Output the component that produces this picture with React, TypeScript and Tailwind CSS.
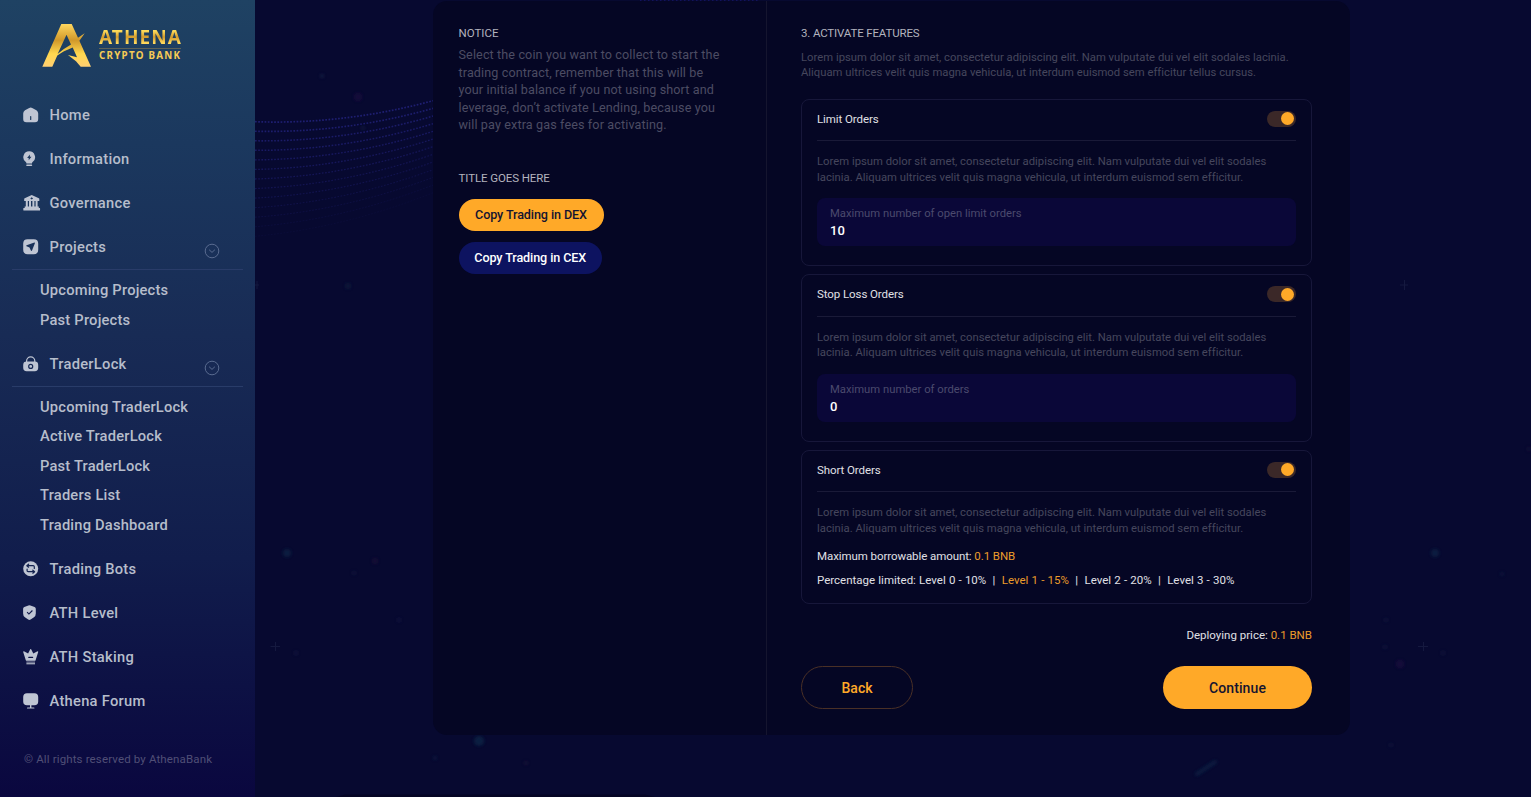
import React from "react";

const menuText = "font-medium text-[14.7px] leading-[20px] text-[#b6bdcb] whitespace-nowrap";

function Icon({ children, w = 18 }: { children: React.ReactNode; w?: number }) {
  return (
    <svg width={w} height="16" viewBox={`0 0 ${w} 16`} fill="#bfc5d3" fillRule="evenodd" className="shrink-0">
      {children}
    </svg>
  );
}

const HomeIcon = () => (
  <Icon>
    <path d="M6.2 .9Q7.7 0 9.2 .9L13.4 3.3Q15.2 4.4 15.2 6.6V12Q15.2 15.2 12 15.2H3.4Q.2 15.2 .2 12V6.6Q.2 4.4 2 3.3ZM7.1 9.6V12.4Q7.1 13 7.7 13Q8.3 13 8.3 12.4V9.6Q8.3 9 7.7 9Q7.1 9 7.1 9.6Z" />
  </Icon>
);
const BulbIcon = () => (
  <Icon>
    <path d="M6.2 .3A5.9 5.9 0 0 1 9.6 11Q9 11.5 9 12.3V12.6H3.4V12.3Q3.4 11.5 2.8 11A5.9 5.9 0 0 1 6.2 .3ZM6.9 3.5L4.1 6.9H5.7V9.2L8.5 5.8H6.9Z" />
    <rect x="3.2" y="13.5" width="6" height="1.5" rx=".7" />
  </Icon>
);
const BankIcon = () => (
  <Icon>
    <path d="M8.7 0L15.8 3.2Q16.3 3.5 16.3 4V6H1.2V4Q1.2 3.5 1.7 3.2ZM8.7 2.2L7.3 3.4L8.7 4.6L10.1 3.4Z" />
    <path d="M2.8 6H4.8V12H2.8ZM6 6H8V12H6ZM9.4 6H11.4V12H9.4ZM12.6 6H14.6V12H12.6Z" />
    <path d="M1.7 11.6H15.8V13H17Q17.2 14.2 17 15.6H.4Q.2 14.2 .4 13H1.7Z" />
  </Icon>
);
const ProjectIcon = () => (
  <Icon>
    <path d="M4.6 .2H10.8Q15.2 .2 15.2 4.6V10.8Q15.2 15.2 10.8 15.2H4.6Q.2 15.2 .2 10.8V4.6Q.2 .2 4.6 .2ZM11.4 3.6L3.6 6.2Q2.8 6.6 3.5 7.2L6.5 8.4L7.9 11.6Q8.4 12.4 8.9 11.7L11.9 4.3Q12.1 3.5 11.4 3.6Z" />
  </Icon>
);
const LockIcon = () => (
  <Icon>
    <path d="M3 6V5A4.7 4.7 0 0 1 12.4 5V6H11.2V5A3.5 3.5 0 0 0 4.2 5V6Z" />
    <path d="M3.6 5.6H11.8Q15.2 5.6 15.2 9V11.8Q15.2 15.2 11.8 15.2H3.6Q.2 15.2 .2 11.8V9Q.2 5.6 3.6 5.6ZM7.7 7.8A2.6 2.6 0 1 0 7.7 13A2.6 2.6 0 1 0 7.7 7.8ZM7.7 9A1.4 1.4 0 1 1 7.7 11.8A1.4 1.4 0 1 1 7.7 9Z" />
  </Icon>
);
const BotIcon = () => (
  <Icon>
    <circle cx="7.7" cy="7.7" r="7.5" />
    <g fill="none" stroke="#13224f" strokeWidth="1.2" strokeLinecap="round" strokeLinejoin="round">
      <path d="M5.6 3.2L3.8 4.7L5.6 6.2M3.9 4.7H10.2Q11.3 4.7 11.3 5.8V7.4M9.8 9.2L11.6 10.7L9.8 12.2M11.5 10.7H5.2Q4.1 10.7 4.1 9.6V8" />
    </g>
  </Icon>
);
const ShieldIcon = () => (
  <Icon>
    <path d="M5.4 .4Q6.4 0 7.4 .4L11.6 2Q12.8 2.5 12.8 3.8V8.4Q12.8 10.8 11 12.2L7.6 14.6Q6.4 15.3 5.2 14.6L1.9 12.2Q.1 10.8 .1 8.4V3.8Q.1 2.5 1.3 2ZM9 5.1L5.9 8.2L4.5 6.8L3.7 7.6L5.9 9.8L9.8 5.9Z" />
  </Icon>
);
const CrownIcon = () => (
  <Icon>
    <path d="M7.7 0Q8.2 0 8.4 .7L10.3 4.6L14 2.4Q15.5 1.9 15.2 3.1L12.6 11.2Q12.4 11.8 11.7 11.8H3.7Q3 11.8 2.8 11.2L.2 3.1Q-.1 1.9 1.4 2.4L5.1 4.6L7 .7Q7.2 0 7.7 0ZM5.8 7.8Q5.2 7.8 5.2 8.4Q5.2 9 5.8 9H9.6Q10.2 9 10.2 8.4Q10.2 7.8 9.6 7.8Z" />
    <rect x="3.4" y="12.6" width="8.6" height="1" opacity=".8" />
    <rect x="3.4" y="14.2" width="8.6" height="1.1" />
  </Icon>
);
const ScreenIcon = () => (
  <Icon>
    <path d="M4 .3H11.4Q15.2 .3 15.2 4.1V8.4Q15.2 12.2 11.4 12.2H8.4V14.4H10.8Q11.5 14.5 11.5 15Q11.5 15.5 10.8 15.5H4.6Q3.9 15.5 3.9 15Q3.9 14.5 4.6 14.4H7V12.2H4Q.2 12.2 .2 8.4V4.1Q.2 .3 4 .3Z" />
  </Icon>
);

function MenuItem({ icon, label, expandable }: { icon: React.ReactNode; label: string; expandable?: boolean }) {
  return (
    <div className="flex h-[44px] items-center pl-[23px] pr-[35px]">
      {icon}
      <span className={`ml-[8.500px] tracking-[0.28px] ${menuText}`}>{label}</span>
      {expandable && (
        <svg width="16" height="16" viewBox="0 0 16 16" fill="none" stroke="#596b90" className="ml-auto mt-[8px]">
          <circle cx="8" cy="8" r="6.8" />
          <path d="M5.4 7L8 9.4L10.6 7" strokeLinecap="round" strokeLinejoin="round" />
        </svg>
      )}
    </div>
  );
}

function SubMenu({ items }: { items: string[] }) {
  return (
    <div className="mx-[12px] mb-[7px] flex flex-col border-t border-[#293c69] pl-[28px] pt-[5.500px]">
      {items.map((t) => (
        <span key={t} className={`flex h-[29.5px] items-center tracking-[0.2px] ${menuText}`}>
          {t}
        </span>
      ))}
    </div>
  );
}

function Logo() {
  return (
    <div className="flex h-[70px] gap-[7px] pl-[42px] pt-[23px]">
      <svg width="50" height="45" viewBox="0 0 50 45" className="shrink-0">
        <defs>
          <linearGradient id="gold" x1="0" y1="0" x2="0" y2="1">
            <stop offset="0" stopColor="#ffd75e" />
            <stop offset=".38" stopColor="#d1982a" />
            <stop offset=".7" stopColor="#ffd84f" />
            <stop offset="1" stopColor="#ffcf72" />
          </linearGradient>
        </defs>
        <path
          fill="url(#gold)"
          fillRule="evenodd"
          d="M19.3 1H29.7L36 14.8L42.7 10.3L37.4 17.8L49 43.7H38.7L34 38.2L26 32L35 34.2L30.7 24.5Q21 28.2 15.3 32.6L10.3 43.7H.3ZM24.5 11.700L15.600 31Q21 26 29 21.500Z"
        />
      </svg>
      <div className="flex w-[83px] flex-col font-['Noto_Sans',sans-serif] font-bold">
        <span className="mt-[2px] bg-gradient-to-b from-[#ffdc5a] from-25% via-[#d39b2c] via-50% to-[#ffd95c] to-75% bg-clip-text text-[19px] leading-[24px] tracking-[1.05px] text-transparent">
          ATHENA
        </span>
        <span className="-mt-px h-px w-[82px] bg-[#5d6257]" />
        <span className="whitespace-nowrap text-[9.800px] leading-[14px] tracking-[1.250px] text-[#f6cb55]">
          CRYPTO BANK
        </span>
      </div>
    </div>
  );
}

function Sidebar() {
  return (
    <aside className="relative flex h-[797px] w-[255px] shrink-0 flex-col bg-[linear-gradient(180deg,#1f4263_0%,#1b385e_18%,#182b55_42%,#111d4c_70%,#0d1144_86%,#0a073f_100%)]">
      <Logo />
      <nav className="flex flex-col pt-[23px]">
        <MenuItem icon={<HomeIcon />} label="Home" />
        <MenuItem icon={<BulbIcon />} label="Information" />
        <MenuItem icon={<BankIcon />} label="Governance" />
        <MenuItem icon={<ProjectIcon />} label="Projects" expandable />
        <SubMenu items={["Upcoming Projects", "Past Projects"]} />
        <MenuItem icon={<LockIcon />} label="TraderLock" expandable />
        <SubMenu
          items={["Upcoming TraderLock", "Active TraderLock", "Past TraderLock", "Traders List", "Trading Dashboard"]}
        />
        <MenuItem icon={<BotIcon />} label="Trading Bots" />
        <MenuItem icon={<ShieldIcon />} label="ATH Level" />
        <MenuItem icon={<CrownIcon />} label="ATH Staking" />
        <MenuItem icon={<ScreenIcon />} label="Athena Forum" />
      </nav>
      <p className="mt-[27px] pl-[24px] text-[11.500px] leading-[18px] tracking-[0.14px] text-[#504f76]">
        © All rights reserved by AthenaBank
      </p>
    </aside>
  );
}

const waves = Array.from({ length: 13 }, (_, i) => {
  const y0 = 121.7 + i * 9.55;
  const y1 = 100.7 + i * 7.67;
  const c = 124.8 + i * 8.9;
  return { d: `M255 ${y0}Q344 ${c - i * 0.3} 433 ${y1}`, o: 0.95 - i * 0.065, w: 1.7 - i * 0.07 };
});

const stars: [number, number, string, number][] = [
  [322, 76, "#15254b", 2], [358, 97, "#1c0c40", 4], [363, 128, "#12223f", 2], [348, 286, "#0b1b3e", 3],
  [287, 553, "#0b2648", 4], [375, 561, "#1a0b38", 3], [399, 620, "#171945", 2], [354, 573, "#121540", 2],
  [296, 653, "#181a45", 2], [479, 741, "#0b2c4b", 5], [435, 758, "#101f44", 2], [526, 763, "#201238", 2],
  [1435, 553, "#0b2648", 4], [1400, 664, "#1a0b40", 4], [1386, 620, "#14173f", 2], [1385, 647, "#14173f", 2],
  [1391, 745, "#14173f", 2], [1502, 574, "#111540", 2], [1529, 449, "#1a1238", 2], [1443, 653, "#151a42", 2],
];

function Backdrop() {
  return (
    <svg className="absolute inset-0" width="1531" height="797" fill="none">
      <defs>
        <filter id="soft" x="-1" y="-1" width="3" height="3">
          <feGaussianBlur stdDeviation="1.5" />
        </filter>
      </defs>
      {waves.map((w) => (
        <path key={w.d} d={w.d} stroke="#202074" strokeWidth={w.w} strokeDasharray="1.7 1.5" opacity={w.o} />
      ))}
      <path d="M640 .5H760" stroke="#12125c" strokeDasharray="1.5 2.5" />
      <g filter="url(#soft)" opacity=".65">
        {stars.map(([x, y, c, r]) => (
          <circle key={`${x}-${y}`} cx={x} cy={y} r={r} fill={c} />
        ))}
        <path d="M1197 774L1215 762" stroke="#0b2446" strokeWidth="4" strokeLinecap="round" />
      </g>
      <path
        d="M270.5 646.5H280M275.5 642V651M1418 646.5H1428M1423.5 642V651M1400 285H1408M1404.500 280V290M255 285H259M257 281V289"
        stroke="#15193f"
      />
      <path d="M336 797L345 794.500H645L655 797Z" fill="#050524" />
    </svg>
  );
}

function Toggle() {
  return (
    <span className="mr-[0.5px] flex h-[16px] w-[28.500px] items-center justify-end rounded-full bg-[#3b2828] pr-[1.5px]">
      <span className="h-[13px] w-[13px] rounded-full bg-[#ffa928]" />
    </span>
  );
}

const lorem = "text-[11.25px] leading-[15.8px] tracking-[0.015px] text-[#46465d] whitespace-nowrap";

function FeatureCard({ title, children, className }: { title: string; children: React.ReactNode; className: string }) {
  return (
    <section className={`flex flex-col rounded-[8px] border border-[#17173a] px-[15px] ${className}`}>
      <header className="flex h-[41.5px] items-center justify-between border-b border-[#1a1a38] pb-[2px]">
        <h3 className="pt-px text-[11.5px] tracking-[-0.08px] text-[#e0e0e6]">{title}</h3>
        <Toggle />
      </header>
      <p className={`mt-[13px] ${lorem}`}>
        Lorem ipsum dolor sit amet, consectetur adipiscing elit. Nam vulputate dui vel elit sodales
        <br />
        lacinia. Aliquam ultrices velit quis magna vehicula, ut interdum euismod sem efficitur.
      </p>
      {children}
    </section>
  );
}

function NumberField({ label, value }: { label: string; value: string }) {
  return (
    <div className="mt-[12.500px] flex h-[48px] flex-col rounded-[8px] bg-[#0a0738] pl-[13px] pt-[7px]">
      <span className="text-[11.25px] leading-[17px] text-[#4b4a6d]">{label}</span>
      <span className="text-[13px] font-medium leading-[17px] text-white">{value}</span>
    </div>
  );
}

const Gold = ({ children }: { children: React.ReactNode }) => <span className="text-[#eb9c2b]">{children}</span>;

export default function App() {
  return (
    <div className="relative flex h-[797px] w-[1531px] overflow-hidden bg-[#070930] font-[Roboto,sans-serif]">
      <Backdrop />
      <Sidebar />
      <main className="relative ml-[178px] mt-px flex h-[734px] w-[917px] rounded-[14px] bg-[#050624]">
        <div className="flex w-[334px] flex-col items-start border-r border-[#15152f] pl-[25.500px] pt-[22px]">
          <h2 className="text-[11.5px] leading-[20px] text-[#b3b3be]">NOTICE</h2>
          <p className="mt-[3px] whitespace-nowrap text-[12.600px] leading-[17.600px] tracking-[0.12px] text-[#4c4c63]">
            Select the coin you want to collect to start the
            <br />
            trading contract, remember that this will be
            <br />
            your initial balance if you not using short and
            <br />
            leverage, don’t activate Lending, because you
            <br />
            will pay extra gas fees for activating.
          </p>
          <h2 className="mt-[34px] text-[11.5px] leading-[20px] tracking-[-0.1px] text-[#b3b3be]">TITLE GOES HERE</h2>
          <button className="mt-[11px] h-[32px] w-[145px] whitespace-nowrap rounded-full bg-[#ffa928] pt-px text-[12.600px] font-medium tracking-[-0.1px] text-[#141430]">
            Copy Trading in DEX
          </button>
          <button className="mt-[11px] h-[32px] w-[143.500px] whitespace-nowrap rounded-full bg-[#0d1360] pt-px text-[12.600px] font-medium tracking-[-0.1px] text-white">
            Copy Trading in CEX
          </button>
        </div>
        <div className="flex w-[545px] flex-col pl-[34px] pt-[22px]">
          <h2 className="text-[11.5px] leading-[20px] tracking-[-0.15px] text-[#b3b3be]">3. ACTIVATE FEATURES</h2>
          <p className={`mt-[6.500px] ${lorem}`}>
            Lorem ipsum dolor sit amet, consectetur adipiscing elit. Nam vulputate dui vel elit sodales lacinia.
            <br />
            Aliquam ultrices velit quis magna vehicula, ut interdum euismod sem efficitur tellus cursus.
          </p>
          <div className="mt-[17.500px] flex flex-col gap-[8px]">
            <FeatureCard title="Limit Orders" className="h-[167.500px]">
              <NumberField label="Maximum number of open limit orders" value="10" />
            </FeatureCard>
            <FeatureCard title="Stop Loss Orders" className="h-[167.500px]">
              <NumberField label="Maximum number of orders" value="0" />
            </FeatureCard>
            <FeatureCard title="Short Orders" className="h-[154.500px]">
              <div className="mt-[7.500px] flex flex-col whitespace-pre text-[11.5px] leading-[24px] text-[#e0e0e6]">
                <p className="tracking-[-0.08px]">
                  Maximum borrowable amount: <Gold>0.1 BNB</Gold>
                </p>
                <p className="[word-spacing:0.33px]">
                  {"Percentage limited: Level 0 - 10%  |  "}
                  <Gold>Level 1 - 15%</Gold>
                  {"  |  Level 2 - 20%  |  Level 3 - 30%"}
                </p>
              </div>
            </FeatureCard>
          </div>
          <p className="mt-[21px] text-right text-[11.5px] leading-[20px] text-[#e0e0e6]">
            Deploying price: <Gold>0.1 BNB</Gold>
          </p>
          <div className="mt-[21px] flex justify-between">
            <button className="h-[43px] w-[112px] rounded-full border border-[#4a3026] pt-px text-[14px] font-medium text-[#ffa928]">
              Back
            </button>
            <button className="h-[43px] w-[149px] rounded-full bg-[#ffa928] pt-px text-[14px] font-medium tracking-[0.1px] text-[#141430]">
              Continue
            </button>
          </div>
        </div>
      </main>
    </div>
  );
}
